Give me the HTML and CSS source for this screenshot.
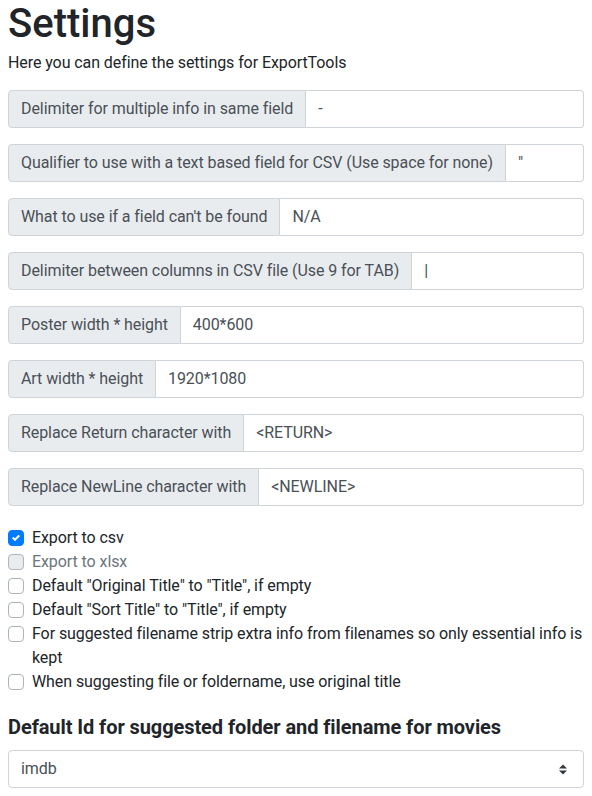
FILE: index.html
```html
<!DOCTYPE html>
<html>
<head>
<meta charset="utf-8">
<link rel="stylesheet" href="styles.css">
</head>
<body>
<div class="page">
  <h1 class="title">Settings</h1>
  <p class="lead">Here you can define the settings for ExportTools</p>

  <div class="igroup"><span class="ilabel">Delimiter for multiple info in same field</span><input class="ifield" type="text" value="-"></div>
  <div class="igroup"><span class="ilabel">Qualifier to use with a text based field for CSV (Use space for none)</span><input class="ifield" type="text" value="&quot;"></div>
  <div class="igroup"><span class="ilabel">What to use if a field can't be found</span><input class="ifield" type="text" value="N/A"></div>
  <div class="igroup"><span class="ilabel">Delimiter between columns in CSV file (Use 9 for TAB)</span><input class="ifield" type="text" value="|"></div>
  <div class="igroup"><span class="ilabel">Poster width * height</span><input class="ifield" type="text" value="400*600"></div>
  <div class="igroup"><span class="ilabel">Art width * height</span><input class="ifield" type="text" value="1920*1080"></div>
  <div class="igroup"><span class="ilabel">Replace Return character with</span><input class="ifield" type="text" value="<RETURN>"></div>
  <div class="igroup"><span class="ilabel">Replace NewLine character with</span><input class="ifield" type="text" value="<NEWLINE>"></div>

  <div class="checks">
    <label class="check"><span class="box checked"><svg viewBox="0 0 8 8" width="8" height="8"><path fill="#fff" d="M6.564.75l-3.59 3.612-1.538-1.55L0 4.26l2.974 2.99L8 2.193z"/></svg></span><span class="ctext">Export to csv</span></label>
    <label class="check disabled"><span class="box"></span><span class="ctext">Export to xlsx</span></label>
    <label class="check"><span class="box"></span><span class="ctext">Default "Original Title" to "Title", if empty</span></label>
    <label class="check"><span class="box"></span><span class="ctext">Default "Sort Title" to "Title", if empty</span></label>
    <label class="check"><span class="box"></span><span class="ctext">For suggested filename strip extra info from filenames so only essential info is kept</span></label>
    <label class="check"><span class="box"></span><span class="ctext">When suggesting file or foldername, use original title</span></label>
  </div>

  <h5 class="subhead">Default Id for suggested folder and filename for movies</h5>
  <div class="select">
    <span class="svalue">imdb</span>
    <svg class="sarrow" width="8" height="11" viewBox="0 0 4 5"><path fill="#343a40" d="M2 0L0 2h4zm0 5L0 3h4z"/></svg>
  </div>
</div>
</body>
</html>
```
FILE: styles.css
```css
* { box-sizing: border-box; }
body {
  margin: 0;
  font-family: Roboto, "Noto Sans", sans-serif;
  font-size: 16px;
  line-height: 24px;
  letter-spacing: -0.08px;
  color: #212529;
  background: #fff;
}
.page { padding: 0 8px; width: 592px; }
.title {
  font-size: 40px;
  font-weight: 500;
  line-height: 47px;
  margin: 0 0 4px;
  letter-spacing: 0;
}
.lead { margin: 0 0 15px; }
.igroup {
  display: flex;
  height: 38px;
  margin-bottom: 16px;
}
.ilabel {
  display: flex;
  align-items: center;
  padding: 0 12px;
  background: #e9ecef;
  border: 1px solid #ced4da;
  border-radius: 4px 0 0 4px;
  color: #495057;
  white-space: nowrap;
}
.ifield {
  flex: 1;
  min-width: 0;
  border: 1px solid #ced4da;
  border-left: 0;
  border-radius: 0 4px 4px 0;
  padding: 0 12px;
  font: inherit;
  letter-spacing: inherit;
  color: #495057;
  background: #fff;
}
.checks { padding-top: 4px; }
.check {
  display: flex;
  align-items: flex-start;
  gap: 8px;
}
.box {
  flex: none;
  width: 16px;
  height: 16px;
  margin-top: 4px;
  border: 1px solid #adb5bd;
  border-radius: 4px;
  background: #fff;
  display: flex;
  align-items: center;
  justify-content: center;
}
.box.checked { background: #007bff; border-color: #007bff; }
.disabled .box { background: #e9ecef; border-color: #adb5bd; }
.disabled .ctext { color: #6c757d; }
.subhead {
  font-size: 20px;
  font-weight: 700;
  line-height: 24px;
  margin: 21px 0 11px;
}
.select {
  height: 38px;
  border: 1px solid #ced4da;
  border-radius: 4px;
  display: flex;
  align-items: center;
  justify-content: space-between;
  padding: 0 16px 0 12px;
  color: #495057;
}
```
